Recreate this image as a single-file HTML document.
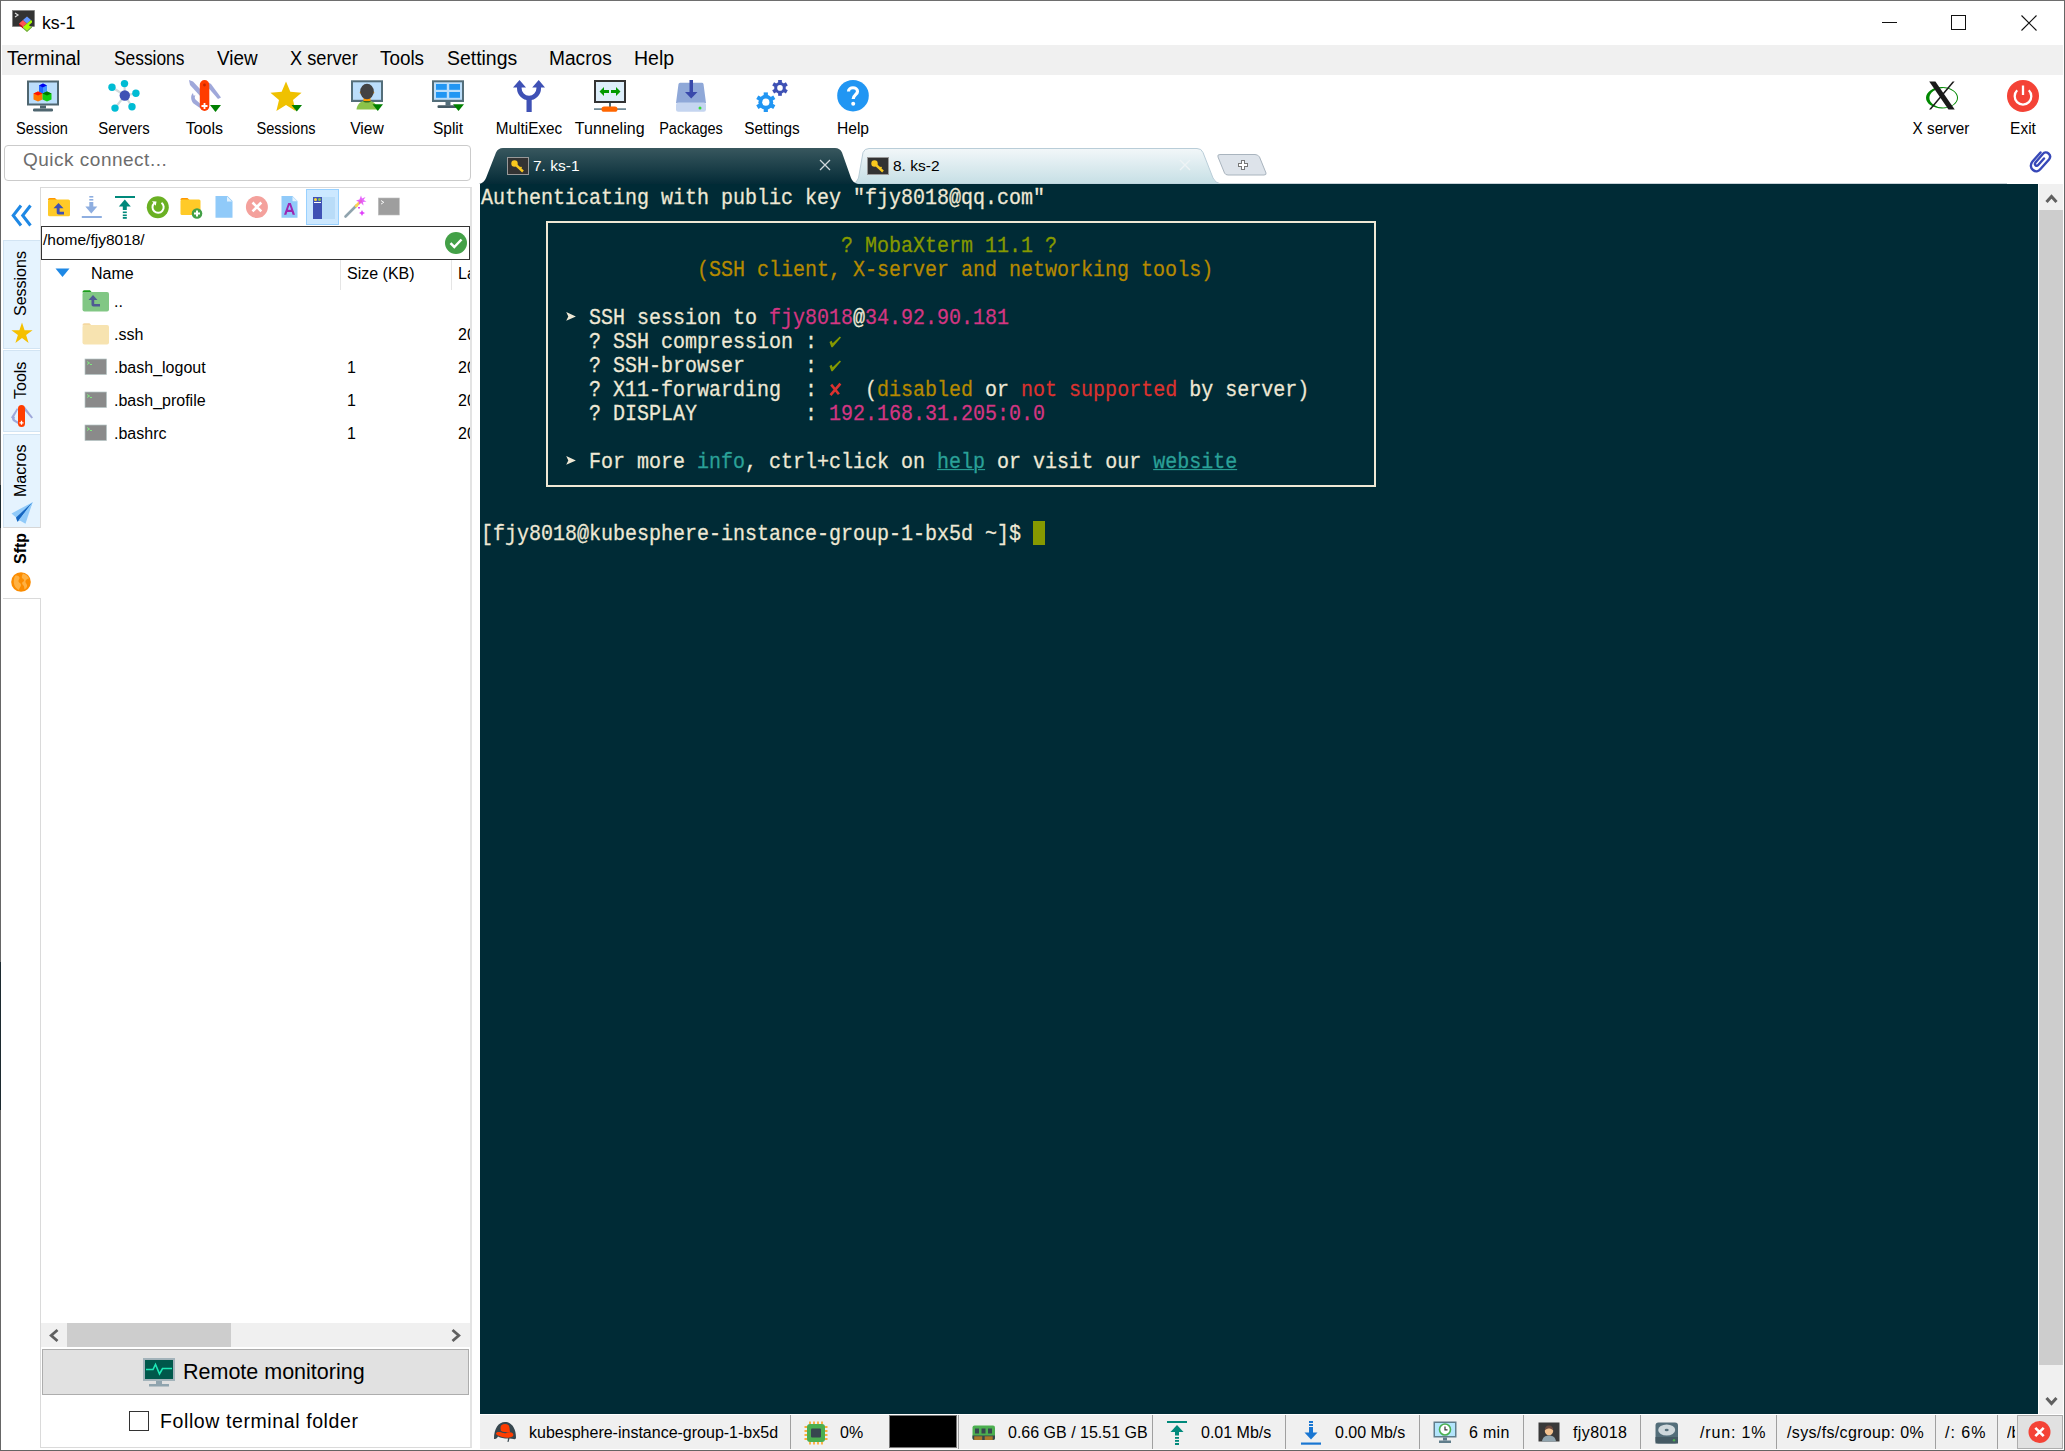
<!DOCTYPE html>
<html><head><meta charset="utf-8">
<style>
*{margin:0;padding:0;box-sizing:border-box}
html,body{width:2065px;height:1451px;overflow:hidden;background:#fff;font-family:"Liberation Sans",sans-serif;color:#000}
.a{position:absolute}
svg.a{overflow:visible}
.t{position:absolute;white-space:nowrap;line-height:1}
.menu span{position:absolute;top:48px;font-size:19.5px;line-height:20px}
.lbl{position:absolute;top:120px;font-size:16px;line-height:18px;text-align:center;width:100px;margin-left:-50px}
#term{position:absolute;left:480px;top:184px;width:1558px;height:1230px;background:#002b36;overflow:hidden}
.ln{position:absolute;left:1px;height:24px;line-height:24px;font-family:"Liberation Mono",monospace;font-size:20px;color:#eee8d5;white-space:pre;transform-origin:0 17px;transform:translateY(2px) scaleY(1.07);-webkit-text-stroke:0.25px currentColor}
.g{color:#859900}.y{color:#b58900}.m{color:#d33682}.r{color:#dc322f}.c{color:#2aa198}.u{text-decoration:underline;text-decoration-thickness:1px;text-underline-offset:1px}
.st{position:absolute;top:1424px;font-size:16px;line-height:18px;white-space:nowrap}
.sep{position:absolute;top:1415px;width:1px;height:34px;background:#a0a0a0}
.fl{position:absolute;font-size:16px;line-height:18px;white-space:nowrap}
.vt{position:absolute;font-size:16px;line-height:18px;white-space:nowrap;transform-origin:0 0;transform:rotate(-90deg)}
</style></head>
<body>
<!-- window frame -->
<div class="a" style="left:0;top:0;width:2065px;height:1px;background:#6e6e6e"></div>
<div class="a" style="left:0;top:0;width:1px;height:1451px;background:#666"></div>
<div class="a" style="left:0;top:962px;width:1px;height:148px;background:#1c2a30"></div>
<div class="a" style="left:0;top:485px;width:1px;height:43px;background:#1c2a30"></div>
<div class="a" style="left:2064px;top:0;width:1px;height:1451px;background:#666"></div>
<div class="a" style="left:0;top:1450px;width:2065px;height:1px;background:#646464"></div>
<!-- app icon -->
<svg class="a" style="left:12px;top:10px" width="24" height="24" viewBox="0 0 24 24">
<rect x="0.5" y="0.5" width="22" height="16" fill="#333" stroke="#777" stroke-width="0.6"/>
<path d="M3 3L6 5L3 7" stroke="#ddd" stroke-width="1.2" fill="none"/>
<path d="M7 13.5L11 10L15 13.5L11 17Z" fill="#f55"/>
<path d="M7 13.5L7 15L11 18.5L11 17Z" fill="#c00"/>
<path d="M11 10L15 6.5L19 10L15 13.5Z" fill="#69f"/>
<path d="M11 17L15 13.5L19 17L15 20.5Z" fill="#af0"/>
<path d="M15 13.5L19 10L20 11L20 12.5L16 16Z" fill="#af0"/>
<path d="M11 18.5L15 22L20 17.5L20 16L15 20.5L11 17Z" fill="#6a2"/>
</svg>
<div class="t" style="left:42px;top:13px;font-size:19px;line-height:20px;transform:scaleX(0.93);transform-origin:0 0">ks-1</div>
<!-- window controls -->
<div class="a" style="left:1882px;top:22px;width:15px;height:1px;background:#111"></div>
<div class="a" style="left:1951px;top:15px;width:15px;height:15px;border:1px solid #111"></div>
<svg class="a" style="left:2021px;top:15px" width="16" height="16"><path d="M0.5 0.5L15.5 15.5M15.5 0.5L0.5 15.5" stroke="#111" stroke-width="1.1"/></svg>
<!-- menu -->
<div class="a" style="left:2px;top:45px;width:2061px;height:30px;background:#f0f0f0"></div>
<div class="menu">
<span style="left:7px;transform:scaleX(1.0);transform-origin:0 0">Terminal</span>
<span style="left:114px;transform:scaleX(0.89);transform-origin:0 0">Sessions</span>
<span style="left:217px;transform:scaleX(0.967);transform-origin:0 0">View</span>
<span style="left:290px;transform:scaleX(0.934);transform-origin:0 0">X server</span>
<span style="left:380px;transform:scaleX(0.967);transform-origin:0 0">Tools</span>
<span style="left:447px;transform:scaleX(0.996);transform-origin:0 0">Settings</span>
<span style="left:549px;transform:scaleX(0.981);transform-origin:0 0">Macros</span>
<span style="left:634px;transform:scaleX(1.0);transform-origin:0 0">Help</span>
</div>
<!-- toolbar icons -->
<svg class="a" style="left:27px;top:80px" width="32" height="32" viewBox="0 0 32 32">
<rect x="0" y="0.5" width="32" height="25" fill="#4f6670"/>
<rect x="2" y="2.5" width="28" height="21" fill="#bbdefb"/>
<rect x="13" y="25.5" width="6" height="3" fill="#4f6670"/>
<rect x="6" y="28.5" width="20" height="3" rx="1.3" fill="#4f6670"/>
<path d="M12 5.5L16 3.5L20 5.5L20 12L16 14L12 12Z" fill="#2266ff"/><path d="M12 5.5L16 3.5L20 5.5L16 7.5Z" fill="#0000ee"/><path d="M16 7.5L20 5.5L20 12L16 14Z" fill="#4499ff"/>
<path d="M6.5 13.5L11 11.5L15.5 13.5L15.5 19.5L11 21.5L6.5 19.5Z" fill="#ff7700"/><path d="M6.5 13.5L11 11.5L15.5 13.5L11 15.5Z" fill="#ff1100"/>
<path d="M15.5 13.5L20 11.5L24.5 13.5L24.5 19.5L20 21.5L15.5 19.5Z" fill="#11cc11"/><path d="M15.5 13.5L20 11.5L24.5 13.5L20 15.5Z" fill="#007700"/>
</svg>
<svg class="a" style="left:108px;top:80px" width="32" height="32" viewBox="0 0 32 32">
<g stroke="#d3dadd" stroke-width="2.2"><path d="M16.8 15.5L16.5 3.6M16.8 15.5L4 7.3M16.8 15.5L27.9 13.3M16.8 15.5L7 28.1M16.8 15.5L24 26.7"/></g>
<g fill="#00bcd4"><circle cx="16.5" cy="3.6" r="3.7"/><circle cx="4" cy="7.3" r="3.7"/><circle cx="27.9" cy="13.3" r="3.7"/><circle cx="7" cy="28.1" r="3.7"/><circle cx="24" cy="26.7" r="3.7"/></g>
<circle cx="16.8" cy="15.5" r="5.2" fill="#3f51b5"/>
</svg>
<svg class="a" style="left:189px;top:80px" width="32" height="32" viewBox="0 0 32 32">
<path d="M0 0L4 1.5L12 10L12 17L1 5Z" fill="#9fa8da"/>
<path d="M19.5 2.5L22 4L32 17.5L29 19L19.5 8Z" fill="#9fa8da"/>
<path d="M4 13C1.5 15 1.5 20 4.5 23.5L11 28L11 23.5L6.5 19.5C5.5 18 5.5 16.5 6.5 15.5L4.5 15.5Z" fill="#9fa8da"/>
<rect x="10.8" y="0" width="9.5" height="31" rx="4.75" fill="#ff3d00"/>
<circle cx="15.5" cy="5" r="1.4" fill="#c62800"/>
<path d="M15.5 23v6M12.5 26h6" stroke="#fff" stroke-width="1.8"/>
<path d="M21 25H32L26.5 32Z" fill="#008000"/>
</svg>
<svg class="a" style="left:270px;top:80px" width="32" height="32" viewBox="0 0 32 32">
<path d="M16 1.4L20.33 11.81L31.56 12.7L23 20.03L25.62 31L16 25.12L6.38 31L9 20.03L0.44 12.7L11.67 11.81Z" fill="#efc100"/>
<path d="M21.5 25H32L26.8 31.5Z" fill="#008000"/>
</svg>
<svg class="a" style="left:351px;top:80px" width="32" height="32" viewBox="0 0 32 32">
<rect x="0" y="0.3" width="32" height="21.7" fill="#546e7a"/>
<rect x="2" y="2.3" width="28" height="17.5" fill="#bbdefb"/>
<circle cx="9.7" cy="12.5" r="1" fill="#ff9800"/><circle cx="22.3" cy="12.5" r="1" fill="#ff9800"/>
<rect x="12.5" y="18" width="7" height="4" fill="#ff9800"/>
<ellipse cx="16" cy="11.5" rx="6.8" ry="7.8" fill="#424242"/>
<path d="M5.5 29.5C6 24.5 9 22 12.5 21L19.5 21C23 22 26 24.5 26.5 29.5Z" fill="#8bc34a"/>
<path d="M12 21L20 21C19 23 13 23 12 21Z" fill="#33691e"/>
<path d="M21.5 24.3H32L26.8 31Z" fill="#008000"/>
</svg>
<svg class="a" style="left:432px;top:80px" width="32" height="32" viewBox="0 0 32 32">
<rect x="0" y="0.3" width="32" height="21.7" fill="#546e7a"/>
<rect x="2" y="2.3" width="28" height="17.5" fill="#bbdefb"/>
<g fill="#2196f3"><rect x="4" y="4" width="10.8" height="5.8"/><rect x="17.2" y="4" width="10.8" height="5.8"/><rect x="4" y="12" width="10.8" height="5.8"/><rect x="17.2" y="12" width="10.8" height="5.8"/></g>
<rect x="13.5" y="22" width="5" height="3.5" fill="#546e7a"/>
<rect x="5.5" y="25.3" width="20" height="2.7" rx="1" fill="#455a64"/>
<path d="M21 24.3H32L26.5 31Z" fill="#008000"/>
</svg>
<svg class="a" style="left:513px;top:80px" width="32" height="32" viewBox="0 0 32 32">
<path d="M0 7.5L6.5 0L13 7.5ZM19.2 7.5L25.7 0L32 7.5Z" fill="#3f51b5"/>
<path d="M6.3 7L6.3 8.3A9.7 9.7 0 0 0 25.75 8.3L25.75 7" stroke="#3f51b5" stroke-width="4.6" fill="none"/>
<rect x="13.5" y="17" width="5.2" height="15" fill="#3f51b5"/>
</svg>
<svg class="a" style="left:594px;top:80px" width="32" height="32" viewBox="0 0 32 32">
<rect x="1" y="1" width="30" height="21" fill="#ddeefa" stroke="#333" stroke-width="2"/>
<path d="M5.5 11.5L10 7V10H15V13H10V16Z" fill="#009900"/>
<path d="M26.5 11.5L22 7V10H17V13H22V16Z" fill="#009900"/>
<rect x="15" y="23" width="2" height="4" fill="#546e7a"/>
<rect x="0" y="28.3" width="32" height="1.6" fill="#607d8b"/>
<rect x="7.5" y="26.5" width="16" height="5.3" rx="2.6" fill="#ff6600"/>
</svg>
<svg class="a" style="left:675px;top:80px" width="32" height="32" viewBox="0 0 32 32">
<path d="M4 3.2Q4 2.8 5 2.8L27 2.8Q28 2.8 28.5 4L31 23L1 23L3.5 4Z" fill="#8fa8d8"/>
<rect x="1" y="22.5" width="30" height="9.3" rx="2.2" fill="#c5d5f0"/>
<rect x="14.5" y="0" width="3.5" height="13" fill="#3949ab"/>
<path d="M10 12H22.5L16.2 18.5Z" fill="#3949ab"/>
<circle cx="25" cy="28" r="1.5" fill="#33dd33"/>
</svg>
<svg class="a" style="left:756px;top:80px" width="32" height="32" viewBox="0 0 32 32">
<g transform="translate(9.8 22.2)" fill="#2196f3"><circle r="7.4"/><rect x="-2.1" y="-9.8" width="4.2" height="19.6"/><rect x="-2.1" y="-9.8" width="4.2" height="19.6" transform="rotate(60)"/><rect x="-2.1" y="-9.8" width="4.2" height="19.6" transform="rotate(120)"/><circle r="3.6" fill="#fff"/></g>
<g transform="translate(24 7.9)" fill="#3f51b5"><circle r="5.8"/><rect x="-1.85" y="-7.9" width="3.7" height="15.8"/><rect x="-1.85" y="-7.9" width="3.7" height="15.8" transform="rotate(60)"/><rect x="-1.85" y="-7.9" width="3.7" height="15.8" transform="rotate(120)"/><circle r="2.8" fill="#fff"/></g>
</svg>
<svg class="a" style="left:837px;top:80px" width="32" height="32" viewBox="0 0 32 32">
<circle cx="16" cy="15.7" r="15.8" fill="#2196f3"/>
<path d="M11.5 11.5C11.5 6.5 20.5 6.5 20.5 11.5C20.5 14.5 16.2 15 16.2 19" stroke="#fff" stroke-width="3.2" fill="none"/>
<circle cx="16.2" cy="23.8" r="2" fill="#fff"/>
</svg>
<svg class="a" style="left:1926px;top:80px" width="32" height="32" viewBox="0 0 32 32">
<path d="M0 17.8A16 10.7 0 1 0 32 17.8A16 10.7 0 1 0 0 17.8ZM3.4 17.8A13.8 9.7 0 1 0 31 17.8A13.8 9.7 0 1 0 3.4 17.8Z" fill="#008800" fill-rule="evenodd"/>
<path d="M3.2 1.4L9.4 1.4L28.7 29.4L22.5 29.4Z" fill="#1a1a1a"/>
<path d="M26.6 1.4L28.6 1.4L5 29.4L3 29.4Z" fill="#1a1a1a"/>
</svg>
<svg class="a" style="left:2007px;top:80px" width="32" height="32" viewBox="0 0 32 32">
<circle cx="16" cy="16" r="16" fill="#f44336"/>
<path d="M10.2 10.3A8.3 8.3 0 1 0 21.8 10.3" stroke="#fff" stroke-width="2.3" fill="none"/>
<path d="M16 5.5V15" stroke="#fff" stroke-width="2.3"/>
</svg>
<!-- toolbar labels -->
<div class="lbl" style="left:42.2px;transform:scaleX(0.91)">Session</div>
<div class="lbl" style="left:123.9px;transform:scaleX(0.93)">Servers</div>
<div class="lbl" style="left:204.4px;transform:scaleX(1.0)">Tools</div>
<div class="lbl" style="left:285.8px;transform:scaleX(0.91)">Sessions</div>
<div class="lbl" style="left:366.6px;transform:scaleX(0.98)">View</div>
<div class="lbl" style="left:447.5px;transform:scaleX(0.97)">Split</div>
<div class="lbl" style="left:529.4px;transform:scaleX(0.955)">MultiExec</div>
<div class="lbl" style="left:609.7px;transform:scaleX(1.0)">Tunneling</div>
<div class="lbl" style="left:690.6px;transform:scaleX(0.905)">Packages</div>
<div class="lbl" style="left:771.7px;transform:scaleX(0.96)">Settings</div>
<div class="lbl" style="left:852.8px;transform:scaleX(0.976)">Help</div>
<div class="lbl" style="left:1941.4px;transform:scaleX(0.953)">X server</div>
<div class="lbl" style="left:2023.0px;transform:scaleX(0.966)">Exit</div>
<!-- quick connect -->
<div class="a" style="left:4px;top:145px;width:467px;height:36px;border:1px solid #cbcbcb;border-radius:4px;background:#fff"></div>
<div class="t" style="left:23px;top:150px;font-size:19px;line-height:20px;color:#6d6d6d;letter-spacing:0.5px">Quick connect...</div>
<!-- left panel frame -->
<div class="a" style="left:40px;top:187px;width:432px;height:1261px;border:1px solid #dadada;border-right:2px solid #e3e3e3;background:#fff"></div>
<!-- chevron -->
<svg class="a" style="left:11px;top:204px" width="22" height="24" viewBox="0 0 22 24">
<path d="M10 1.5L2.2 11.5L10 21.5M19.5 1.5L11.7 11.5L19.5 21.5" stroke="#1e88e5" stroke-width="3" fill="none"/>
</svg>
<!-- side tabs -->
<div class="a" style="left:3px;top:240px;width:37px;height:109px;background:#e5f3fe;border:1px solid #d2e4f3;border-right:none"></div>
<div class="a" style="left:3px;top:350px;width:37px;height:82px;background:#e5f3fe;border:1px solid #d2e4f3;border-right:none"></div>
<div class="a" style="left:3px;top:434px;width:37px;height:94px;background:#e5f3fe;border:1px solid #d2e4f3;border-right:none;border-bottom-color:#d6d6d6"></div>
<div class="a" style="left:3px;top:528px;width:38px;height:71px;background:#fff;border-bottom:1px solid #dadada"></div>
<div class="vt" style="left:12px;top:316px">Sessions</div>
<div class="vt" style="left:12px;top:399px">Tools</div>
<div class="vt" style="left:12px;top:497px">Macros</div>
<div class="vt" style="left:12px;top:564px;font-weight:bold">Sftp</div>
<svg class="a" style="left:11px;top:322px" width="22" height="22" viewBox="0 0 22 22"><path d="M11 0.5L13.6 8.3L21.6 8.3L15.1 13.1L17.6 21L11 16.1L4.4 21L6.9 13.1L0.4 8.3L8.4 8.3Z" fill="#f5c000"/></svg>
<svg class="a" style="left:10px;top:404px" width="24" height="24" viewBox="0 0 24 24">
<path d="M1 13.5L7 4L8 5.5L3 15Z" fill="#9fa8da"/><path d="M3 17C1.5 15.5 2 13 3.5 12L5 13.5C4.3 14.3 4.5 15.5 5.5 16L8 17.5V20Z" fill="#9fa8da"/>
<path d="M15 3L23 13.5L21.5 14.5L15 7Z" fill="#9fa8da"/>
<rect x="8" y="1" width="7" height="22" rx="3.5" fill="#ff3d00"/>
<path d="M11.5 16.8v4M9.5 18.8h4" stroke="#fff" stroke-width="1.3"/>
</svg>
<svg class="a" style="left:10px;top:501px" width="24" height="24" viewBox="0 0 24 24">
<path d="M1.5 12.4L22.6 1.2L16 16.8L7.4 20.8L6 16.5Z" fill="#90caf9"/>
<path d="M6 16.5L22.6 1.2L16 16.8Z" fill="#90caf9"/>
<path d="M6 16.4L22.6 1.2L9 19L7.4 20.8Z" fill="#1565c0"/>
<path d="M9 19L22.6 1.2L15.5 22.8Z" fill="#90caf9"/>
</svg>
<svg class="a" style="left:11px;top:572px" width="22" height="22" viewBox="0 0 22 22">
<circle cx="10" cy="10" r="9.8" fill="#fb8c00"/>
<path d="M4 4C6 3 8 4 8.5 5.5C9 7 7 8 7.5 9.5C8 11 10 11 10 13C10 15 8 16 8 18C5.5 17 3 14 2.8 10.5C2.7 8 3 6 4 4ZM12 1.5C14.5 2 17 4 18 6.5C16.5 6.5 15 7.5 14.5 9C14 10.5 15.5 11.5 16 13C16.5 14.5 15.5 16.5 13.5 17.5C13 16 13.5 14 12 13C10.5 12 11 10 12.5 9.5C13.5 9 13 7 11.5 6.5C10.5 6 10.5 4 12 1.5Z" fill="#ffb74d" opacity="0.85"/>
</svg>
<!-- sftp toolbar -->
<svg class="a" style="left:47px;top:196px" width="24" height="24" viewBox="0 0 24 24">
<path d="M1 3.5Q1 2 2.5 2L8 2L10 4L1 4Z" fill="#ff9800"/>
<rect x="1" y="3.5" width="22" height="16.8" rx="1.6" fill="#ffca28"/>
<path d="M11.5 7L6.5 12.2H9.7V16.5C9.7 17.8 10.5 18.5 11.8 18.5H17V15.8H12.6V12.2H16.5Z" fill="#3f51b5"/>
</svg>
<svg class="a" style="left:81px;top:195px" width="22" height="24" viewBox="0 0 22 24">
<g fill="#8eaee0"><rect x="8.3" y="1" width="4" height="1.6"/><rect x="8.3" y="4" width="4" height="1.6"/><rect x="8.3" y="7" width="4" height="5"/><path d="M4.3 11.5H16.3L10.3 18.5Z"/><rect x="0.8" y="21" width="20" height="2"/></g>
</svg>
<svg class="a" style="left:114px;top:195px" width="22" height="24" viewBox="0 0 22 24">
<g fill="#00897b"><rect x="1" y="1" width="20" height="2"/><path d="M4.8 11.5H16.8L10.8 4.5Z"/><rect x="8.8" y="11" width="4" height="4"/><rect x="8.8" y="16.5" width="4" height="1.6"/><rect x="8.8" y="19.5" width="4" height="1.6"/><rect x="8.8" y="22" width="4" height="1.8"/></g>
</svg>
<svg class="a" style="left:146px;top:195px" width="24" height="24" viewBox="0 0 24 24">
<circle cx="11.8" cy="12.2" r="11" fill="#6ab023"/>
<path d="M8.2 8.2A5.6 5.6 0 1 0 15.5 7.8" stroke="#fff" stroke-width="2" fill="none"/>
<path d="M6 6.2L10.5 6.5L9.8 10.8Z" fill="#fff"/>
</svg>
<svg class="a" style="left:180px;top:196px" width="24" height="24" viewBox="0 0 24 24">
<path d="M0.5 3.5Q0.5 2 2 2L7.5 2L9.5 4L0.5 4Z" fill="#ff9800"/>
<rect x="0.5" y="3.5" width="20" height="15.5" rx="1.5" fill="#ffca28"/>
<circle cx="17" cy="17.5" r="5.3" fill="#43a047"/>
<path d="M17 14.5v6M14 17.5h6" stroke="#fff" stroke-width="2"/>
</svg>
<svg class="a" style="left:215px;top:196px" width="18" height="22" viewBox="0 0 18 22">
<path d="M0.5 0H12.5L17.5 5V21.8H0.5Z" fill="#90caf9"/><path d="M12 0.6L17 5.6H12Z" fill="#e3f2fd"/>
</svg>
<svg class="a" style="left:245px;top:195px" width="24" height="24" viewBox="0 0 24 24">
<circle cx="11.9" cy="12" r="11" fill="#f4a19c"/>
<path d="M7.5 7.5L16.3 16.3M16.3 7.5L7.5 16.3" stroke="#fff" stroke-width="2.6"/>
</svg>
<svg class="a" style="left:281px;top:195px" width="18" height="24" viewBox="0 0 18 24">
<path d="M0.5 1H11.5L16.5 6V22.8H0.5Z" fill="#90caf9"/><path d="M11.5 1.4L16.3 6.2H11.5Z" fill="#e3f2fd"/>
<path d="M3 19.8L7.2 8H9.8L14 19.8H11.6L10.8 17H6.2L5.4 19.8ZM6.9 14.8H10.1L8.5 10Z" fill="#9c27b0"/>
</svg>
<div class="a" style="left:306px;top:189px;width:33px;height:36px;background:#cce8ff;border:1px solid #99d1ff"></div>
<div class="a" style="left:313px;top:197px;width:9px;height:22px;background:#3f51b5"></div>
<div class="a" style="left:322px;top:197px;width:13px;height:22px;background:#b9dcf8"></div>
<div class="a" style="left:314px;top:198px;width:3px;height:3px;background:#fdd835;border-radius:50%"></div>
<div class="a" style="left:318px;top:198px;width:3px;height:3px;background:#8bc34a;border-radius:50%"></div>
<div class="a" style="left:314px;top:202px;width:7px;height:1px;background:#fff"></div>
<svg class="a" style="left:344px;top:195px" width="24" height="24" viewBox="0 0 24 24">
<path d="M1.5 21.5L12.5 10.5" stroke="#90a4ae" stroke-width="2.6" stroke-linecap="round"/>
<path d="M12 11L17 6" stroke="#ffd54f" stroke-width="2.6" stroke-linecap="round"/>
<path d="M17 0.5L18 3.5L21.5 2L19.5 5L22.5 6.5L19 7L19.5 10.5L17 8L14.5 10L15 7L12 5.5L15.5 4.5Z" fill="#e040fb" opacity="0.8"/>
<path d="M18 15L19 17L21 18L19 19L18 21L17 19L15 18L17 17Z" fill="#e040fb"/>
<rect x="14" y="12" width="2" height="1.5" fill="#e040fb"/>
</svg>
<svg class="a" style="left:378px;top:197px" width="22" height="20" viewBox="0 0 22 20">
<rect x="0.3" y="1" width="21" height="17" fill="#9e9e9e" stroke="#bdbdbd" stroke-width="0.6"/>
<path d="M3 3.5L5.8 5.3L3 7.1" stroke="#fff" stroke-width="0.9" fill="none"/>
</svg>
<!-- path box -->
<div class="a" style="left:41px;top:226px;width:429px;height:34px;border:1px solid #333;background:#fff"></div>
<div class="t" style="left:43px;top:231px;font-size:15.5px;line-height:17px">/home/fjy8018/</div>
<svg class="a" style="left:444px;top:231px" width="24" height="24" viewBox="0 0 24 24">
<circle cx="12" cy="12" r="11" fill="#43a047"/>
<path d="M6.5 12.2L10.3 16L17.5 8.5" stroke="#fff" stroke-width="2.5" fill="none"/>
</svg>
<!-- list header -->
<svg class="a" style="left:55px;top:268px" width="16" height="10"><path d="M0.5 0.5H14.5L7.5 9Z" fill="#1e88e5"/></svg>
<div class="fl" style="left:91px;top:265px">Name</div>
<div class="a" style="left:340px;top:260px;width:1px;height:30px;background:#e5e5e5"></div>
<div class="fl" style="left:347px;top:265px">Size (KB)</div>
<div class="a" style="left:451px;top:260px;width:1px;height:30px;background:#e5e5e5"></div>
<div class="fl" style="left:458px;top:265px;width:12px;overflow:hidden">Last</div>
<!-- rows -->
<svg class="a" style="left:82px;top:289px" width="28" height="24" viewBox="0 0 28 24">
<path d="M0.5 3Q0.5 1.2 2.3 1.2L8 1.2L10 3.5L0.5 3.5Z" fill="#1b9e1b"/>
<rect x="0.5" y="3" width="26.5" height="19.5" rx="2" fill="#81c784"/>
<path d="M11 6L6.5 11H9.5V15.5C9.5 16.8 10.3 17.5 11.5 17.5H18V15H12.2V11H15.5Z" fill="#4f5b93"/>
</svg>
<div class="fl" style="left:114px;top:293px">..</div>
<svg class="a" style="left:82px;top:322px" width="28" height="24" viewBox="0 0 28 24">
<path d="M0.5 3Q0.5 1.2 2.3 1.2L7.5 1.2L9.5 3.5L0.5 3.5Z" fill="#f5d8a0"/>
<rect x="0.5" y="3" width="26.5" height="19.5" rx="2" fill="#f7e3b0"/>
</svg>
<div class="fl" style="left:114px;top:326px">.ssh</div>
<div class="fl" style="left:458px;top:326px;width:12px;overflow:hidden">2019</div>
<svg class="a" style="left:85px;top:359px" width="22" height="16" viewBox="0 0 22 16"><rect x="0" y="0" width="21.5" height="15.5" fill="#8a8a8a" stroke="#b5c5c5" stroke-width="0.7"/><path d="M2 2.5L4.5 4L2 5.5M5 5.5H7" stroke="#7dff7d" stroke-width="0.8" fill="none"/></svg>
<div class="fl" style="left:114px;top:359px">.bash_logout</div>
<div class="fl" style="left:347px;top:359px">1</div>
<div class="fl" style="left:458px;top:359px;width:12px;overflow:hidden">2019</div>
<svg class="a" style="left:85px;top:392px" width="22" height="16" viewBox="0 0 22 16"><rect x="0" y="0" width="21.5" height="15.5" fill="#8a8a8a" stroke="#b5c5c5" stroke-width="0.7"/><path d="M2 2.5L4.5 4L2 5.5M5 5.5H7" stroke="#7dff7d" stroke-width="0.8" fill="none"/></svg>
<div class="fl" style="left:114px;top:392px">.bash_profile</div>
<div class="fl" style="left:347px;top:392px">1</div>
<div class="fl" style="left:458px;top:392px;width:12px;overflow:hidden">2019</div>
<svg class="a" style="left:85px;top:425px" width="22" height="16" viewBox="0 0 22 16"><rect x="0" y="0" width="21.5" height="15.5" fill="#8a8a8a" stroke="#b5c5c5" stroke-width="0.7"/><path d="M2 2.5L4.5 4L2 5.5M5 5.5H7" stroke="#7dff7d" stroke-width="0.8" fill="none"/></svg>
<div class="fl" style="left:114px;top:425px">.bashrc</div>
<div class="fl" style="left:347px;top:425px">1</div>
<div class="fl" style="left:458px;top:425px;width:12px;overflow:hidden">2019</div>
<!-- horizontal scrollbar -->
<div class="a" style="left:41px;top:1323px;width:429px;height:24px;background:#f0f0f0"></div>
<div class="a" style="left:67px;top:1323px;width:164px;height:24px;background:#cdcdcd"></div>
<svg class="a" style="left:48px;top:1329px" width="12" height="14"><path d="M9.5 1L3.2 6.5L9.5 12" stroke="#606060" stroke-width="2.8" fill="none"/></svg>
<svg class="a" style="left:450px;top:1329px" width="12" height="14"><path d="M2.5 1L8.8 6.5L2.5 12" stroke="#606060" stroke-width="2.8" fill="none"/></svg>
<!-- remote monitoring button -->
<div class="a" style="left:42px;top:1349px;width:427px;height:46px;background:#e1e1e1;border:1px solid #adadad"></div>
<svg class="a" style="left:143px;top:1358px" width="32" height="29" viewBox="0 0 32 29">
<rect x="0" y="0" width="32" height="23" fill="#a3b3ba"/>
<rect x="2" y="2" width="28" height="19" fill="#00584b"/>
<path d="M3 11.5H10L12.5 6.5L16.5 16L19.5 10.5H29" stroke="#1de9b6" stroke-width="1.6" fill="none"/>
<rect x="13" y="23" width="6" height="3" fill="#90a4ae"/>
<rect x="6" y="26" width="20" height="2.5" fill="#90a4ae"/>
</svg>
<div class="t" style="left:183px;top:1361px;font-size:21.5px;line-height:22px">Remote monitoring</div>
<!-- follow terminal folder -->
<div class="a" style="left:129px;top:1411px;width:20px;height:20px;border:1px solid #333;background:#fff"></div>
<div class="t" style="left:160px;top:1411px;font-size:19.5px;line-height:20px;letter-spacing:0.6px">Follow terminal folder</div>
<!-- tabs -->
<svg class="a" style="left:476px;top:146px" width="800" height="38" viewBox="0 0 800 38">
<defs>
<linearGradient id="ta" x1="0" y1="0" x2="0" y2="1"><stop offset="0" stop-color="#38575e"/><stop offset="1" stop-color="#042b37"/></linearGradient>
<linearGradient id="tb" x1="0" y1="0" x2="0" y2="1"><stop offset="0" stop-color="#f2f7f9"/><stop offset="1" stop-color="#c6dfe5"/></linearGradient>
</defs>
<path d="M376 38Q381 37 382.5 32L387 6.5Q388.5 2.5 393 2.5L721 2.5Q725.5 2.5 727 6.5L737 32Q739 37 745 38Z" fill="url(#tb)" stroke="#b9cdd8" stroke-width="1"/>
<path d="M3 38Q8 37 10 32L20 6.5Q22 2 27 2L359 2Q364 2 366 6.5L375 32Q377 37 382 38Z" fill="url(#ta)"/>
<path d="M744 8.5L779 8.5Q782 8.5 783.5 11L790 27Q790.5 29 788 29L752 29Q749.5 29 748.5 27L742 11Q741 8.5 744 8.5Z" fill="#dde3ea" stroke="#a9b4be" stroke-width="1"/>
<path d="M767 14v10M762 19h10" stroke="#777" stroke-width="4"/><path d="M767 15v8M763 19h8" stroke="#fff" stroke-width="2"/>
</svg>
<!-- tab 1 contents -->
<div class="a" style="left:507px;top:157px;width:22px;height:18px;background:#333;border:1px solid #999"></div>
<svg class="a" style="left:510px;top:159px" width="16" height="14" viewBox="0 0 16 14"><circle cx="4.5" cy="4.5" r="3.2" fill="#f9c81e"/><path d="M6 6L13 12.5" stroke="#f9c81e" stroke-width="2.4"/><path d="M10 9.5L11.5 8" stroke="#f9c81e" stroke-width="1.6"/></svg>
<div class="t" style="left:533px;top:157px;font-size:15.5px;line-height:18px;color:#fff">7. ks-1</div>
<svg class="a" style="left:819px;top:159px" width="12" height="12"><path d="M1 1L11 11M11 1L1 11" stroke="#d0d8db" stroke-width="1.3"/></svg>
<!-- tab 2 contents -->
<div class="a" style="left:867px;top:157px;width:22px;height:18px;background:#333;border:1px solid #999"></div>
<svg class="a" style="left:870px;top:159px" width="16" height="14" viewBox="0 0 16 14"><circle cx="4.5" cy="4.5" r="3.2" fill="#f9c81e"/><path d="M6 6L13 12.5" stroke="#f9c81e" stroke-width="2.4"/><path d="M10 9.5L11.5 8" stroke="#f9c81e" stroke-width="1.6"/></svg>
<div class="t" style="left:893px;top:157px;font-size:15.5px;line-height:18px;color:#000">8. ks-2</div>
<svg class="a" style="left:1179px;top:159px" width="12" height="12"><path d="M1 1L11 11M11 1L1 11" stroke="#eef3f5" stroke-width="1.3"/></svg>
<!-- paperclip -->
<svg class="a" style="left:2029px;top:151px" width="24" height="24" viewBox="0 0 24 24">
<path d="M11.5 1.5L3.5 10.5C1 13.5 1.5 17 4 19C6.5 21 9.5 20.5 11.5 18L20 8.5C21.5 6.5 21.3 4 19.5 2.5C17.7 1 15.3 1.3 13.8 3L6.5 11.5C5.7 12.5 5.8 13.6 6.5 14.3C7.3 15 8.4 14.9 9.2 14L15 7.5" stroke="#3748b8" stroke-width="2.4" fill="none" stroke-linecap="round"/>
</svg>
<!-- terminal -->
<div id="term">
<div class="ln" style="top:1px">Authenticating with public key "fjy8018@qq.com"</div>
<div class="a" style="left:66px;top:37px;width:830px;height:266px;border:2px solid #eee8d5"></div>
<div class="ln" style="top:49px">                              <span class="g">? MobaXterm 11.1 ?</span></div>
<div class="ln" style="top:73px">                  <span class="y">(SSH client, X-server and networking tools)</span></div>
<div class="ln" style="top:121px">         SSH session to <span class="m">fjy8018</span>@<span class="m">34.92.90.181</span></div>
<div class="ln" style="top:145px">         ? SSH compression : </div>
<div class="ln" style="top:169px">         ? SSH-browser     : </div>
<div class="ln" style="top:193px">         ? X11-forwarding  :    (<span class="y">disabled</span> or <span class="r">not supported</span> by server)</div>
<div class="ln" style="top:217px">         ? DISPLAY         : <span class="m">192.168.31.205:0.0</span></div>
<div class="ln" style="top:265px">         For more <span class="c">info</span>, ctrl+click on <span class="c u">help</span> or visit our <span class="c u">website</span></div>
<div class="ln" style="top:337px">[fjy8018@kubesphere-instance-group-1-bx5d ~]$ </div>
<svg class="a" style="left:85px;top:126px" width="14" height="12"><path d="M1.2 2L10.9 6.4L1.2 10.7L3.3 6.4Z" fill="#eee8d5"/></svg>
<svg class="a" style="left:85px;top:270px" width="14" height="12"><path d="M1.2 2L10.9 6.4L1.2 10.7L3.3 6.4Z" fill="#eee8d5"/></svg>
<svg class="a" style="left:348px;top:151px" width="14" height="14"><path d="M1.5 7L3.6 5.8L4.7 8.2L11.8 1.6L13 2.6L4.6 12.2L3.4 12.2Z" fill="#859900"/></svg>
<svg class="a" style="left:348px;top:175px" width="14" height="14"><path d="M1.5 7L3.6 5.8L4.7 8.2L11.8 1.6L13 2.6L4.6 12.2L3.4 12.2Z" fill="#859900"/></svg>
<svg class="a" style="left:348px;top:198px" width="14" height="16"><path d="M3.2 2.6L10.9 12.3M12.4 1.6L2.5 13.2" stroke="#dc322f" stroke-width="2.6" fill="none"/></svg>
<div class="a" style="left:553px;top:337px;width:12px;height:24px;background:#869900"></div>
</div>
<!-- vertical scrollbar -->
<div class="a" style="left:1218px;top:183px;width:789px;height:1px;background:#c9d3d9"></div>
<div class="a" style="left:2039px;top:184px;width:24px;height:1230px;background:#f0f0f0"></div>
<div class="a" style="left:2039px;top:210px;width:24px;height:1155px;background:#cdcdcd"></div>
<svg class="a" style="left:2045px;top:193px" width="14" height="11"><path d="M1.5 9L6.5 3.5L11.5 9" stroke="#606060" stroke-width="3" fill="none"/></svg>
<svg class="a" style="left:2045px;top:1396px" width="14" height="11"><path d="M1.5 2L6.5 7.5L11.5 2" stroke="#606060" stroke-width="3" fill="none"/></svg>
<!-- status bar -->
<div class="a" style="left:480px;top:1414px;width:1583px;height:1px;background:#fff"></div>
<div class="a" style="left:480px;top:1415px;width:1583px;height:34px;background:#f0f0f0"></div>
<svg class="a" style="left:492px;top:1420px" width="26" height="24" viewBox="0 0 26 24">
<path d="M2 18.7C2 8.5 6.5 2 13 2C19.5 2 24 8 24 17.5C24 19 23 19.5 21.5 19L17.5 18.5L16.5 22L15.5 22L16 18.5C12 18.5 8.5 18 6 16.5L5 18C4 19 2.5 19.5 2 18.7Z" fill="#37474f"/>
<path d="M8.5 8C8.7 5 10 4 13 4C16 4 17.3 5 17.5 8L18 12.5L9 12.5Z" fill="#ff3d00"/>
<path d="M4 13.5C4 11.8 6.5 11.5 9 12.3C12 13.3 15 13.3 17.5 12.3L19.5 12.5C21.5 13.3 22 15.5 20.5 16.5C18 18 14 18 10 17C7 16 4 15 4 13.5Z" fill="#ff3d00"/>
<path d="M8.5 11.3C10 12.3 13 12.8 14.5 12.5" stroke="#37474f" stroke-width="1.2" fill="none"/>
</svg>
<div class="st" style="left:529px">kubesphere-instance-group-1-bx5d</div>
<div class="sep" style="left:790px"></div>
<svg class="a" style="left:804px;top:1421px" width="24" height="24" viewBox="0 0 24 24">
<g stroke="#ff9800" stroke-width="1.4"><path d="M6 0.5v3M10 0.5v3M14 0.5v3M18 0.5v3M6 20.5v3M10 20.5v3M14 20.5v3M18 20.5v3M0.5 6h3M0.5 10h3M0.5 14h3M0.5 18h3M20.5 6h3M20.5 10h3M20.5 14h3M20.5 18h3"/></g>
<rect x="3" y="3" width="18" height="18" rx="3" fill="#4caf50"/>
<rect x="7" y="7.5" width="10" height="9" rx="1" fill="#37474f"/>
</svg>
<div class="st" style="left:840px">0%</div>
<div class="a" style="left:889px;top:1415px;width:68px;height:33px;background:#000;border:1px solid #777"></div>
<div class="sep" style="left:958px"></div>
<svg class="a" style="left:972px;top:1425px" width="24" height="16" viewBox="0 0 24 16">
<rect x="0.5" y="0.5" width="22.5" height="14.5" rx="2" fill="#4caf50"/>
<rect x="3" y="3.5" width="4" height="5" fill="#37474f"/><rect x="9.5" y="3.5" width="4" height="5" fill="#37474f"/><rect x="16" y="3.5" width="4" height="5" fill="#37474f"/>
<path d="M0.5 10.5H23V13Q23 15 21 15H2.5Q0.5 15 0.5 13Z" fill="#37474f"/>
<rect x="2.2" y="11.3" width="8" height="3.7" fill="#a9792a"/><rect x="12.7" y="11.3" width="8" height="3.7" fill="#a9792a"/>
</svg>
<div class="st" style="left:1008px">0.66 GB / 15.51 GB</div>
<div class="sep" style="left:1152px"></div>
<svg class="a" style="left:1166px;top:1420px" width="22" height="26" viewBox="0 0 22 26">
<g fill="#00897b"><rect x="1" y="1" width="20" height="2"/><path d="M4.5 12H17.5L11 5Z"/><rect x="9" y="11.5" width="4" height="4"/><rect x="9" y="17" width="4" height="1.8"/><rect x="9" y="20" width="4" height="1.8"/><rect x="9" y="23" width="4" height="2"/></g>
</svg>
<div class="st" style="left:1201px">0.01 Mb/s</div>
<div class="sep" style="left:1285px"></div>
<svg class="a" style="left:1300px;top:1420px" width="22" height="26" viewBox="0 0 22 26">
<g fill="#1976d2"><rect x="9" y="1" width="4" height="2"/><rect x="9" y="4" width="4" height="2"/><rect x="9" y="7" width="4" height="6"/><path d="M4.5 12.5H17.5L11 19.5Z"/><rect x="1" y="22.5" width="20" height="2.2"/></g>
</svg>
<div class="st" style="left:1335px">0.00 Mb/s</div>
<div class="sep" style="left:1419px"></div>
<svg class="a" style="left:1433px;top:1421px" width="24" height="24" viewBox="0 0 24 24">
<rect x="0.5" y="0.5" width="23" height="16" fill="#607d8b"/>
<rect x="2" y="2" width="20" height="13" fill="#b3e5fc"/>
<circle cx="12" cy="8.5" r="5.5" fill="#fff" stroke="#4caf50" stroke-width="1.6"/>
<path d="M12 5.5V8.8H14.5" stroke="#333" stroke-width="1.2" fill="none"/>
<rect x="10" y="16.5" width="4" height="3" fill="#607d8b"/>
<rect x="6" y="19.5" width="12" height="2.5" fill="#607d8b"/>
</svg>
<div class="st" style="left:1469px;letter-spacing:0.3px">6 min</div>
<div class="sep" style="left:1523px"></div>
<svg class="a" style="left:1538px;top:1422px" width="22" height="20" viewBox="0 0 22 20">
<rect x="0.5" y="0.5" width="21" height="19" fill="#3a3a3a"/>
<path d="M4 19.5C4.5 15.5 7 13.5 11 13.5C15 13.5 17.5 15.5 18 19.5Z" fill="#90a4ae"/>
<circle cx="11" cy="9" r="4.2" fill="#f3c28f"/>
<path d="M6.8 8.5C6.8 5 8.5 3.5 11 3.5C13.5 3.5 15.2 5 15.2 8.5C14 7 12 6.5 11 6.5C10 6.5 8 7 6.8 8.5Z" fill="#6d4c41"/>
</svg>
<div class="st" style="left:1573px;letter-spacing:0.4px">fjy8018</div>
<div class="sep" style="left:1640px"></div>
<svg class="a" style="left:1655px;top:1422px" width="24" height="22" viewBox="0 0 24 22">
<rect x="0.5" y="0.5" width="22.5" height="21" rx="3" fill="#546e7a"/>
<ellipse cx="11.7" cy="8" rx="8.5" ry="5.5" fill="#cfd8dc"/>
<ellipse cx="11.7" cy="8" rx="2" ry="1.3" fill="#546e7a"/>
<rect x="0.5" y="15" width="22.5" height="6.5" fill="#455a64"/>
<circle cx="19" cy="18.3" r="1.2" fill="#4caf50"/>
</svg>
<div class="st" style="left:1700px;letter-spacing:0.85px">/run: 1%</div>
<div class="sep" style="left:1776px"></div>
<div class="st" style="left:1787px;letter-spacing:0.35px">/sys/fs/cgroup: 0%</div>
<div class="sep" style="left:1935px"></div>
<div class="st" style="left:1945px;letter-spacing:1px">/: 6%</div>
<div class="sep" style="left:1997px"></div>
<div class="st" style="left:2007px;width:8px;overflow:hidden">/boot</div>
<div class="a" style="left:2017px;top:1415px;width:46px;height:34px;background:#e1e1e1;border:1px solid #adadad"></div>
<svg class="a" style="left:2028px;top:1420px" width="24" height="24" viewBox="0 0 24 24">
<circle cx="11.5" cy="12" r="11" fill="#f44336"/>
<path d="M7.3 7.8L15.7 16.2M15.7 7.8L7.3 16.2" stroke="#fff" stroke-width="2.6"/>
</svg>
</body></html>
